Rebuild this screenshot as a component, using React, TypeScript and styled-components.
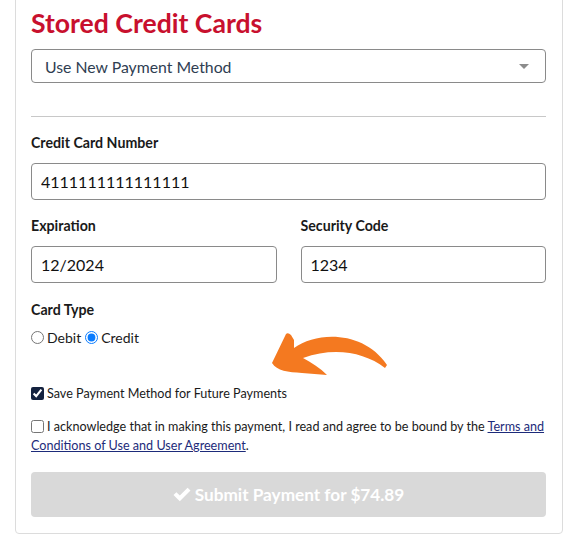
import styled, { createGlobalStyle } from 'styled-components';

const GlobalStyle = createGlobalStyle`
    body {
        margin: 0;
        background: #fff;
        font-family: Lato, "Open Sans", sans-serif;
        color: #1a1a1a;
    }
`;

const Card = styled.div`
    position: relative;
    box-sizing: border-box;
    width: 548px;
    margin: -10px 0 0 15px;
    padding: 17px 16px 16px 15px;
    border: 1px solid #dcdcdc;
    border-radius: 4px;
    display: flex;
    flex-direction: column;
`;

const Title = styled.h2`
    margin: 0;
    font-size: 26.6px;
    line-height: 31px;
    font-weight: 700;
    color: #c8102e;
`;

const SelectBox = styled.div`
    position: relative;
    margin-top: 10px;
    height: 34px;
    box-sizing: border-box;
    border: 1px solid #8a8a8a;
    border-radius: 4px;
    padding: 0 13px;
    display: flex;
    align-items: center;
    font-size: 15.8px;
    color: #2f3e52;
`;

const Caret = styled.span`
    position: absolute;
    right: 16px;
    top: 14px;
    border-left: 5px solid transparent;
    border-right: 5px solid transparent;
    border-top: 5px solid #8c8c8c;
`;

const Divider = styled.hr`
    margin: 33px 0 17px;
    border: 0;
    border-top: 1px solid #c8c8c8;
`;

const Label = styled.label`
    display: block;
    font-size: 14.2px;
    line-height: 18px;
    font-weight: 700;
    margin-bottom: 11px;
`;

const Field = styled.div`
    display: flex;
    flex-direction: column;
`;

const Row = styled.div`
    display: grid;
    grid-template-columns: 1fr 1fr;
    column-gap: 24px;
    margin-top: 17px;
`;

const TextInput = styled.input`
    box-sizing: border-box;
    width: 100%;
    height: 37px;
    border: 1px solid #8a8a8a;
    border-radius: 4px;
    padding: 0 9px;
    font-family: Lato, sans-serif;
    font-size: 16px;
    color: #111;
    outline: none;
`;

const Group = styled.div`
    margin-top: 18px;
`;

const RadioRow = styled.div`
    display: flex;
    align-items: center;
    font-size: 14px;
    margin-top: -1px;
`;

const Radio = styled.input`
    margin: 0 3px 0 0;
    width: 13px;
    height: 13px;
    accent-color: #0a7cff;
`;

const RadioLabel = styled.span`
    margin-right: 4px;
`;

const CheckRow = styled.label<{ $gap: number }>`
    display: block;
    font-size: 12.6px;
    line-height: 19.5px;
    margin-top: ${p => p.$gap}px;
`;

const Check = styled.input`
    margin: 0 3px 0 0;
    width: 13px;
    height: 13px;
    vertical-align: -2px;
    accent-color: #14223f;
`;

const Link = styled.a`
    color: #1d2b7a;
    text-decoration: underline;
`;

const SubmitButton = styled.button`
    margin-top: 16px;
    height: 45px;
    border: 0;
    border-radius: 4px;
    background: #d9d9d9;
    color: #fff;
    font-family: Lato, sans-serif;
    font-size: 17.2px;
    font-weight: 700;
    display: flex;
    align-items: center;
    justify-content: center;
    gap: 4px;
`;

const Arrow = styled.svg`
    position: absolute;
    left: 244px;
    top: 334px;
`;

export default function App() {
    return (
        <>
            <GlobalStyle />
            <Card>
                <Title>Stored Credit Cards</Title>
                <SelectBox>
                    Use New Payment Method
                    <Caret />
                </SelectBox>
                <Divider />
                <Field>
                    <Label>Credit Card Number</Label>
                    <TextInput defaultValue="4111111111111111" />
                </Field>
                <Row>
                    <Field>
                        <Label>Expiration</Label>
                        <TextInput defaultValue="12/2024" />
                    </Field>
                    <Field>
                        <Label>Security Code</Label>
                        <TextInput defaultValue="1234" />
                    </Field>
                </Row>
                <Group>
                    <Label>Card Type</Label>
                    <RadioRow>
                        <Radio type="radio" name="cardType" />
                        <RadioLabel>Debit</RadioLabel>
                        <Radio type="radio" name="cardType" defaultChecked />
                        <RadioLabel>Credit</RadioLabel>
                    </RadioRow>
                </Group>
                <CheckRow $gap={38}>
                    <Check type="checkbox" defaultChecked />
                    Save Payment Method for Future Payments
                </CheckRow>
                <CheckRow $gap={13}>
                    <Check type="checkbox" />
                    I acknowledge that in making this payment, I read and agree to be bound by the{' '}
                    <Link href="#">Terms and Conditions of Use and User Agreement</Link>.
                </CheckRow>
                <SubmitButton disabled>
                    <svg width="18" height="15" viewBox="0 0 18 15">
                        <path d="M0.5 8 L3.4 5.2 L6.8 8.6 L14.6 0.8 L17.5 3.6 L6.8 14.3 Z" fill="#fff" />
                    </svg>
                    Submit Payment for $74.89
                </SubmitButton>
                <Arrow width="140" height="60" viewBox="0 0 140 60">
                    <path
                        d="M12 38 L26 9 Q28 7 31 10 L34 15 L34 23 C58 6 104 6 127 40 L125 43 C104 27 74 22 43 33 C52 38 60 43 67 50 L42 48 C28 47 17 46 12 38 Z"
                        fill="#f47920"
                    />
                </Arrow>
            </Card>
        </>
    );
}
